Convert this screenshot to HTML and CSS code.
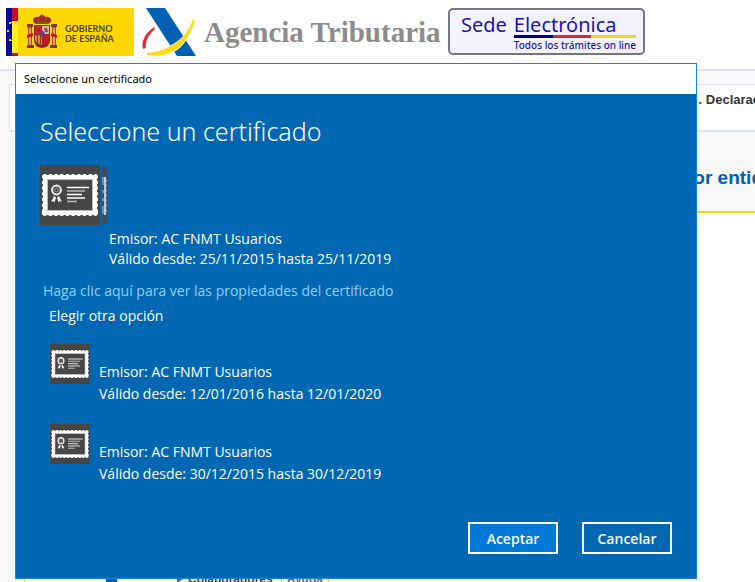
FILE: index.html
```html
<!DOCTYPE html>
<html lang="es">

<head>
    <meta charset="UTF-8">
    <meta name="viewport" content="width=device-width, initial-scale=1.0">
    <title>Agencia Tributaria - Seleccione un certificado</title>
    <link rel="stylesheet" href="styles.css">
</head>

<body>

    <!-- certificate icon, shared by the whole dialog -->
    <svg class="sprite" aria-hidden="true">
        <symbol id="cert" viewBox="0 0 60 60">
            <rect width="60" height="60" fill="#464646"/>
            <rect x="2" y="9" width="56" height="42" rx="3" fill="#fff"/>
            <path d="M7 9H54M7 51H54" stroke="#464646" stroke-width="2" stroke-linecap="round" stroke-dasharray="1 4.700"/>
            <path d="M2 14V47M58 14V47" stroke="#464646" stroke-width="2" stroke-linecap="round" stroke-dasharray="1 4.700"/>
            <rect x="7.5" y="14.5" width="45" height="31" fill="#464646" stroke="#bbb"/>
            <circle cx="16.5" cy="25" r="4.4" fill="none" stroke="#eee" stroke-width="2"/>
            <circle cx="16.5" cy="25" r="1.8" fill="none" stroke="#999" stroke-width="1"/>
            <path d="M14 31l2 1.500-1.500 5-1.300-1.500-2 .8zM19 31l-2 1.500 1.500 5 1.300-1.500 2 .8z" fill="#f4f4f4"/>
            <path d="M27 22.500h22M27 29.500h15M27 33h18" stroke="#fff" stroke-width="1.300"/>
            <path d="M27 26h18M27 36.500h10" stroke="#bbb" stroke-width="1.600"/>
        </symbol>
    </svg>

    <header class="site-header">
        <svg class="logo-gob" viewBox="0 0 128 48" role="img" aria-label="Gobierno de España">
            <rect width="128" height="48" fill="#ffd700"/>
            <rect width="6" height="48" fill="#0a0a96"/>
            <rect x="6" width="6" height="48" fill="#c60b2e"/>
            <rect x="6" y="13" width="6" height="32" fill="#ffee20"/>
            <path d="M3 14h2v2H3zM1 22h2v2H1zM3 31h2v2H3zM5 14h1v1H5zM5 32h1v1H5z" fill="#e8d820"/>
            <!-- coat of arms -->
            <path d="M22 18h4v21h-4zM46 18h4v21h-4z" fill="#b5482c"/>
            <path d="M23 20h2v17h-2zM47 20h2v17h-2z" fill="#d9a08c"/>
            <path d="M21 16h6v3h-6zM45 16h6v3h-6zM21 37h7v3h-7zM44 37h7v3h-7z" fill="#7d3a22"/>
            <path d="M21 27l6-2v3l-6 2zM51 27l-6-2v3l6 2z" fill="#c8102e"/>
            <path d="M28 15c-3-5 2-7 5-6 1-3 5-3 6 0 4-1 8 2 5 6z" fill="#a22a1c"/>
            <path d="M29 14h14v2H29zM35.500 6h1v4h-1zM31 11h2v2h-2zM39 11h2v2h-2z" fill="#7a5a10"/>
            <path d="M28 17h16v15q0 7-8 8-8-1-8-8z" fill="#8f2424"/>
            <path d="M29 18h7v8h-7z" fill="#d2202c"/>
            <path d="M36 18h7v8h-7z" fill="#d8b8b8"/>
            <path d="M29 27h7v10q-7-2-7-6z" fill="#d8902c"/>
            <path d="M36 27h7v5q0 4-7 5z" fill="#c01c28"/>
            <path d="M31 20h3v4h-3zM31 27h1v8h-1zM34 27h1v9h-1z" fill="#8d3020"/>
            <path d="M38 20h3l1 4h-3z" fill="#9b4566"/>
            <ellipse cx="36" cy="26" rx="2.200" ry="3" fill="#3550a0" stroke="#c02030"/>
            <text class="gob-text" x="59" y="24">GOBIERNO</text>
            <text class="gob-text" x="59" y="34">DE ESPAÑA</text>
        </svg>
        <svg class="logo-aeat" viewBox="0 0 54 48" aria-hidden="true">
            <path d="M4 0h19l31 48H35z" fill="#0060b4"/>
            <path d="M12 19C2 26-1 35 1 41l3-1C3 33 7 26 13 21z" fill="#e03038"/>
            <path d="M51 10C45 31 28 42 5 43v2c5 2 15 3 22 1C41 42 49 27 53 11z" fill="#fff"/>
            <path d="M51 11C45 30 28 43 5 45v2c5 1 14 1 20-1C40 41 49 27 53 12z" fill="#ffd91c"/>
        </svg>
        <span class="agency">Agencia Tributaria</span>
        <a class="sede" href="#">
            <span class="sede-word">Sede</span>
            <span class="sede-main">
                <span class="sede-word">Electrónica</span>
                <span class="sede-flag"></span>
                <span class="sede-sub">Todos los trámites on line</span>
            </span>
        </a>
    </header>

    <main class="page">
        <nav class="crumbs">. Declarac</nav>
        <h2 class="page-title">or entid</h2>
        <section class="panel">
            <div class="panel-row">
                <span class="marker"></span>
                <svg class="arrow" viewBox="0 0 6 8" aria-hidden="true"><path d="M0 0l6 4-6 4z" fill="#666"/></svg>
                <span class="collab">Colaboradores</span>
                <a class="help" href="#">Ayuda</a>
            </div>
        </section>
    </main>

    <div class="dialog" role="dialog" aria-labelledby="dialogTitle">
        <div class="dialog-bar">Seleccione un certificado</div>
        <div class="dialog-body">
            <h1 id="dialogTitle">Seleccione un certificado</h1>

            <div class="selected">
                <svg class="cert-big" aria-hidden="true"><use href="#cert"/></svg>
                <svg class="cert-edge" viewBox="0 0 5 56" aria-hidden="true">
                    <rect width="5" height="56" fill="#34506c"/>
                    <path d="M0 0h4v10H0zM0 47h4v9H0z" fill="#464c54"/>
                    <path d="M1 10v37" stroke="#75899c" stroke-width="2"/>
                    <path d="M3 10v38" stroke="#c0cad4" stroke-width="2"/>
                    <path d="M4.500 12v34" stroke="#6f8ba6" stroke-dasharray="3 2"/>
                    <path d="M1 18v22" stroke="#464c54" stroke-width="2" stroke-dasharray="5 3"/>
                </svg>
            </div>
            <p class="selected-info">
                Emisor: AC FNMT Usuarios<br>
                Válido desde: 25/11/2015 hasta 25/11/2019
            </p>
            <a class="properties" href="#">Haga clic aquí para ver las propiedades del certificado</a>
            <p class="other">Elegir otra opción</p>

            <div class="options">
                <button class="option" type="button">
                    <svg class="cert-small" aria-hidden="true"><use href="#cert"/></svg>
                    <span class="option-info">
                        Emisor: AC FNMT Usuarios<br>
                        Válido desde: 12/01/2016 hasta 12/01/2020
                    </span>
                </button>
                <button class="option" type="button">
                    <svg class="cert-small" aria-hidden="true"><use href="#cert"/></svg>
                    <span class="option-info">
                        Emisor: AC FNMT Usuarios<br>
                        Válido desde: 30/12/2015 hasta 30/12/2019
                    </span>
                </button>
            </div>

            <div class="actions">
                <button class="btn btn-primary" type="button">Aceptar</button>
                <button class="btn" type="button">Cancelar</button>
            </div>
        </div>
    </div>

</body>

</html>
```

FILE: styles.css
```css
* {
    box-sizing: border-box;
}

body {
    margin: 0;
    height: 100vh;
    overflow: hidden;
    display: flex;
    flex-direction: column;
    position: relative;
    background-color: #f8f8f8;
    font-family: "Liberation Sans", Arial, sans-serif;
}

.sprite {
    position: absolute;
    width: 0;
    height: 0;
}

/* site behind the dialog */

.site-header {
    display: flex;
    align-items: flex-start;
    flex-shrink: 0;
    gap: 8px;
    height: 71px;
    padding: 8px 6px;
    background-color: #fff;
    border-bottom: 2px solid #dfe5ea;
}

.logo-gob {
    width: 128px;
    height: 48px;
}

.gob-text {
    font-family: Lato, sans-serif;
    font-size: 9px;
    font-weight: bold;
    fill: #4a4412;
}

.logo-aeat {
    width: 54px;
    height: 48px;
}

.agency {
    width: 236px;
    font-family: "Liberation Serif", serif;
    font-size: 29px;
    font-weight: bold;
    line-height: 48px;
    color: #8c8c8c;
    white-space: nowrap;
}

.sede {
    display: flex;
    gap: 7px;
    height: 47px;
    padding: 5px 7px 0 11px;
    border: 2px solid #777;
    border-radius: 5px;
    background-color: #f3f3ff;
    color: #1e14aa;
    text-decoration: none;
    white-space: nowrap;
}

.sede-main {
    display: flex;
    flex-direction: column;
}

.sede-word {
    font-family: "Noto Sans", sans-serif;
    font-size: 20px;
    line-height: 20px;
}

.sede-flag {
    height: 3px;
    background: linear-gradient(to right, #00008c 32%, #dc2838 32%, #dc2838 63%, #ffd21c 63%);
}

.sede-sub {
    font-family: "Noto Sans", sans-serif;
    font-size: 10px;
    font-weight: 500;
    line-height: 14px;
}

.page {
    flex: 1;
    display: flex;
    flex-direction: column;
    padding-top: 13px;
    margin-right: -8px;
}

.crumbs {
    height: 48px;
    margin-left: 9px;
    padding: 6px 2px 0 0;
    border: 1px solid #dde6f0;
    border-bottom-width: 2px;
    background-color: #fff;
    color: #333;
    font-size: 13px;
    font-weight: bold;
    line-height: 18px;
    text-align: right;
}

.page-title {
    margin: 0 0 0 15px;
    padding: 34px 0 21px;
    border-bottom: 2px solid #ffd700;
    color: #0060b4;
    font-size: 19px;
    line-height: 24px;
    text-align: right;
}

.panel {
    flex: 1;
    display: flex;
    align-items: flex-end;
    margin-left: 15px;
    padding-left: 9px;
    background-color: #fff;
}

.panel-row {
    display: flex;
    height: 12px;
    padding-left: 81px;
    border-left: 1px solid #ffd700;
    color: #444;
    font-size: 12px;
    font-weight: bold;
    line-height: 18px;
}

.marker {
    width: 11px;
    margin-right: 60px;
    background-color: #0060b4;
}

.arrow {
    width: 6px;
    height: 8px;
    margin: 5px 5px 0 0;
}

.collab {
    margin-right: 8px;
}

.help {
    padding: 0 5px;
    border: solid #ffc400;
    border-width: 0 1px;
    color: #666;
    text-decoration: none;
}

/* certificate dialog */

.dialog {
    position: absolute;
    top: 63px;
    right: 58px;
    bottom: 3px;
    left: 15px;
    display: flex;
    flex-direction: column;
    border: 1px solid #1883d7;
    background-color: #0067b3;
    color: #fff;
    font-family: "Segoe UI", "Open Sans", sans-serif;
    font-size: 14px;
}

.dialog-bar {
    padding: 0 8px;
    background-color: #fff;
    color: #000;
    font-family: "Segoe UI", "Noto Sans", sans-serif;
    font-size: 11px;
    line-height: 30px;
}

.dialog-body {
    flex: 1;
    display: flex;
    flex-direction: column;
    align-items: flex-start;
    padding: 19px 24px 24px;
}

.dialog h1 {
    margin: 0 0 16px;
    font-family: "Segoe UI", "Noto Sans", sans-serif;
    font-size: 25px;
    font-weight: 300;
    line-height: 36px;
}

.selected {
    display: flex;
    align-items: center;
    gap: 2px;
}

.cert-big {
    width: 60px;
    height: 60px;
}

.cert-edge {
    width: 5px;
    height: 56px;
}

.selected-info {
    margin: 4px 0 12px 69px;
    line-height: 20px;
}

.properties {
    margin-left: 3px;
    color: #8fd0ff;
    line-height: 20px;
    text-decoration: none;
}

.other {
    margin: 5px 0 18px 9px;
    line-height: 20px;
}

.options {
    display: flex;
    flex-direction: column;
    gap: 19px;
    margin-left: 10px;
}

.option {
    display: flex;
    align-items: flex-start;
    gap: 9px;
    padding: 0;
    border: none;
    background: none;
    color: inherit;
    font: inherit;
    line-height: 22px;
    text-align: left;
    cursor: pointer;
}

.cert-small {
    width: 40px;
    height: 40px;
}

.option-info {
    padding-top: 17px;
}

.actions {
    display: flex;
    gap: 24px;
    margin-top: auto;
    align-self: flex-end;
}

.btn {
    width: 90px;
    height: 32px;
    padding: 0;
    border: 2px solid #fff;
    background-color: #0067b3;
    color: #fff;
    font-family: inherit;
    font-size: 14px;
    font-weight: 600;
    cursor: pointer;
}

.btn-primary {
    background-color: #0078d7;
}
```
